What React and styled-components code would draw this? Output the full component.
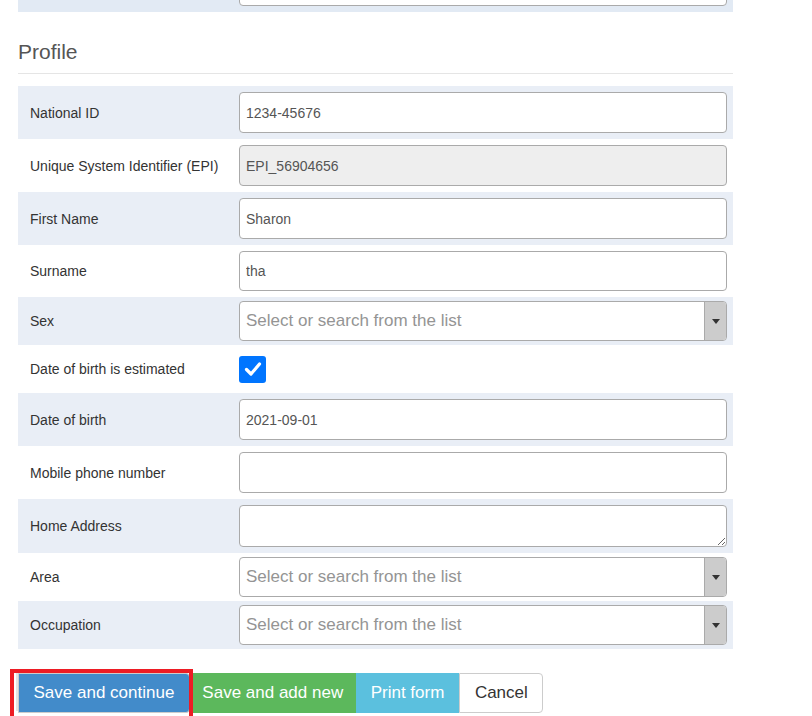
import React from "react";
import styled, { createGlobalStyle } from "styled-components";

const GlobalStyle = createGlobalStyle`
  body {
    margin: 0;
    background: #fff;
    font-family: "Liberation Sans", Arial, sans-serif;
    color: #333;
  }
`;

const Page = styled.div`
  width: 715px;
  padding: 0 18px;
  height: 716px;
  overflow: hidden;
`;

const Table = styled.div`
  display: flex;
  flex-direction: column;
`;

const Row = styled.div`
  display: grid;
  grid-template-columns: 221px 1fr;
  align-items: center;
  padding: ${({ compact }) => (compact ? "4px 6px 4px 0" : "6px 6px 6px 0")};
  background: ${({ striped }) => (striped ? "#e9eef6" : "#fff")};
`;

const CutRow = styled.div`
  height: 12px;
  padding: 0 6px 0 221px;
  overflow: hidden;
  background: #e2eaf4;

  input {
    margin-top: -34px;
  }
`;

const Label = styled.div`
  padding-left: 12px;
  font-size: 14px;
  color: #333;
`;

const Input = styled.input`
  box-sizing: border-box;
  display: block;
  width: 100%;
  height: ${({ tall }) => (tall ? "41px" : "40px")};
  border: 1px solid #aaa;
  border-radius: 4px;
  padding: 0 6px;
  font-family: "Liberation Sans", Arial, sans-serif;
  font-size: 14px;
  color: #555;
  background: ${({ disabled }) => (disabled ? "#eee" : "#fff")};
  outline: none;
`;

const TextArea = styled.textarea`
  box-sizing: border-box;
  display: block;
  width: 100%;
  height: 42px;
  border: 1px solid #aaa;
  border-radius: 4px;
  padding: 6px;
  font-family: "Liberation Sans", Arial, sans-serif;
  font-size: 14px;
  resize: vertical;
  outline: none;
`;

const Select = styled.div`
  box-sizing: border-box;
  height: 40px;
  border: 1px solid #aaa;
  border-radius: 4px;
  display: flex;
  overflow: hidden;
  background: #fff;
`;

const Placeholder = styled.span`
  flex: 1;
  display: flex;
  align-items: center;
  padding-left: 6px;
  font-size: 17px;
  color: #949494;
`;

const Arrow = styled.span`
  width: 21px;
  background: #ccc;
  border-left: 1px solid #aaa;
  display: flex;
  align-items: center;
  justify-content: center;

  &::after {
    content: "";
    border-top: 5px solid #333;
    border-left: 4px solid transparent;
    border-right: 4px solid transparent;
  }
`;

const CheckBox = styled.span`
  width: 27px;
  height: 27px;
  border-radius: 3px;
  background: #0075ff;
  display: flex;
  align-items: center;
  justify-content: center;
`;

const Heading = styled.h2`
  margin: 28px 0 12px;
  padding-bottom: 9px;
  border-bottom: 1px solid #e5e5e5;
  font-size: 21px;
  line-height: 24px;
  font-weight: 400;
  color: #555;
`;

const Actions = styled.div`
  display: flex;
  margin-top: 24px;
`;

const Button = styled.button`
  height: 40px;
  padding: 0 ${({ pad }) => pad}px;
  border: 1px solid ${({ bg }) => bg};
  background: ${({ bg }) => bg};
  color: ${({ fg }) => fg || "#fff"};
  font-family: "Liberation Sans", Arial, sans-serif;
  font-size: 17px;
  border-radius: 0;
  white-space: nowrap;
  cursor: pointer;

  &:last-child {
    border-color: #ccc;
    border-radius: 0 4px 4px 0;
  }
`;

const Highlight = styled.span`
  position: relative;
  display: flex;

  &::before {
    content: "";
    position: absolute;
    left: -2px;
    top: 0;
    bottom: 2px;
    width: 2px;
    background: #e4e4e4;
  }

  &::after {
    content: "";
    position: absolute;
    left: -8px;
    top: -4px;
    right: -3px;
    bottom: -8px;
    border: 4px solid #ed1c24;
    pointer-events: none;
  }
`;

const SelectField = () => (
  <Select>
    <Placeholder>Select or search from the list</Placeholder>
    <Arrow />
  </Select>
);

const App = () => (
  <>
    <GlobalStyle />
    <Page>
      <CutRow>
        <Input defaultValue="" />
      </CutRow>

      <Heading>Profile</Heading>

      <Table>
        <Row striped>
          <Label>National ID</Label>
          <Input tall defaultValue="1234-45676" />
        </Row>
        <Row>
          <Label>Unique System Identifier (EPI)</Label>
          <Input tall disabled defaultValue="EPI_56904656" />
        </Row>
        <Row striped>
          <Label>First Name</Label>
          <Input tall defaultValue="Sharon" />
        </Row>
        <Row>
          <Label>Surname</Label>
          <Input defaultValue="tha" />
        </Row>
        <Row striped compact>
          <Label>Sex</Label>
          <SelectField />
        </Row>
        <Row compact style={{ height: 48, boxSizing: "border-box" }}>
          <Label>Date of birth is estimated</Label>
          <CheckBox>
            <svg width="20" height="20" viewBox="0 0 20 20">
              <path d="M3.5 10.5 L8 15 L16.5 5" fill="none" stroke="#fff" strokeWidth="3.2" strokeLinecap="round" strokeLinejoin="round" />
            </svg>
          </CheckBox>
        </Row>
        <Row striped>
          <Label>Date of birth</Label>
          <Input tall defaultValue="2021-09-01" />
        </Row>
        <Row>
          <Label>Mobile phone number</Label>
          <Input tall defaultValue="" />
        </Row>
        <Row striped>
          <Label>Home Address</Label>
          <TextArea defaultValue="" />
        </Row>
        <Row compact>
          <Label>Area</Label>
          <SelectField />
        </Row>
        <Row striped compact>
          <Label>Occupation</Label>
          <SelectField />
        </Row>
      </Table>

      <Actions>
        <Highlight>
          <Button bg="#428bca" pad={14.5}>Save and continue</Button>
        </Highlight>
        <Button bg="#5cb85c" pad={11.5}>Save and add new</Button>
        <Button bg="#5bc0de" pad={14}>Print form</Button>
        <Button bg="#fff" fg="#333" pad={14.5}>Cancel</Button>
      </Actions>
    </Page>
  </>
);

export default App;
